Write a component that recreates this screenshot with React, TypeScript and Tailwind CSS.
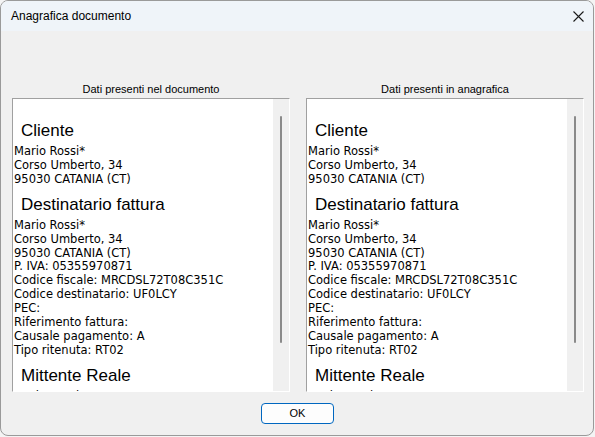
const sections = [
  { title: 'Cliente', lines: ['Mario Rossi*', 'Corso Umberto, 34', '95030 CATANIA (CT)'] },
  {
    title: 'Destinatario fattura',
    lines: [
      'Mario Rossi*',
      'Corso Umberto, 34',
      '95030 CATANIA (CT)',
      'P. IVA: 05355970871',
      'Codice fiscale: MRCDSL72T08C351C',
      'Codice destinatario: UF0LCY',
      'PEC:',
      'Riferimento fattura:',
      'Causale pagamento: A',
      'Tipo ritenuta: RT02',
    ],
  },
  { title: 'Mittente Reale', lines: ['Mario Rossi*', 'Corso Umberto, 34', '95030 CATANIA (CT)'] },
]

function DataPanel({ label }: { label: string }) {
  return (
    <div className="flex w-[278px] flex-col">
      <div className="mb-[2px] h-[14px] text-center text-[11px] leading-[14px] text-black">{label}</div>
      <div className="flex h-[294px] overflow-hidden border border-[#a0a0a0] border-r-white border-b-white">
        <div className="flex-1 overflow-hidden whitespace-nowrap bg-white pt-[14px] pl-[1px]">
          {sections.map((s) => (
            <div key={s.title}>
              <div className="mt-[8px] mb-[4px] pl-[7px] text-[17px] leading-[20px] text-black">{s.title}</div>
              <div className="font-['DejaVu_Sans',sans-serif] text-[11.5px] leading-[13.9px] text-black">
                {s.lines.map((l) => (
                  <div key={l}>{l}</div>
                ))}
              </div>
            </div>
          ))}
        </div>
        <div className="w-[16px] bg-[#f0f0f0] pt-[17px]">
          <div className="ml-[7px] h-[227px] w-[2px] rounded-full bg-[#8a8a8a]" />
        </div>
      </div>
    </div>
  )
}

export default function App() {
  return (
    <div className="h-[437px] w-[595px] bg-[#f4f4f4] font-['Liberation_Sans',Arial,sans-serif]">
      <div className="flex h-[436px] w-[594px] flex-col overflow-hidden rounded-lg border border-[#9a9a9a] bg-[#f0f0f0]">
        <div className="flex h-[30px] items-center justify-between bg-[#eff4f9] pl-[10px] pr-[8px]">
          <span className="text-[12px] text-black">Anagrafica documento</span>
          <svg width="11" height="11" viewBox="0 0 11 11" className="mr-[1px]">
            <path d="M0.5 0.5 L10.5 10.5 M10.5 0.5 L0.5 10.5" stroke="#1a1a1a" strokeWidth="1.1" />
          </svg>
        </div>
        <div className="flex gap-[16px] pt-[51px] pl-[11px]">
          <DataPanel label="Dati presenti nel documento" />
          <DataPanel label="Dati presenti in anagrafica" />
        </div>
        <div className="flex justify-center pt-[11px] pl-[1px]">
          <button className="h-[21px] w-[73px] rounded-[4px] border border-[#0067c0] bg-[#fdfdfd] text-[11px] text-black">
            OK
          </button>
        </div>
      </div>
    </div>
  )
}
